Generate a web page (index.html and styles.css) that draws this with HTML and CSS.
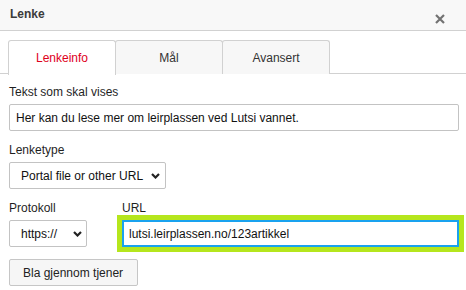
FILE: index.html
```html
<!DOCTYPE html>
<html lang="no">
<head>
<meta charset="utf-8">
<title>Lenke</title>
<link rel="stylesheet" href="styles.css">
</head>
<body>
<div class="dialog">
  <div class="titlebar">
    <span class="title">Lenke</span>
    <span class="close" aria-label="Lukk">
      <svg width="10" height="10" viewBox="0 0 10 10"><path d="M1 1L9 9M9 1L1 9" stroke="#727272" stroke-width="2.2" stroke-linecap="butt"/></svg>
    </span>
  </div>
  <div class="tabs">
    <div class="tab active">Lenkeinfo</div>
    <div class="tab">Mål</div>
    <div class="tab">Avansert</div>
  </div>
  <div class="content">
    <div class="field">
      <label class="label">Tekst som skal vises</label>
      <div class="input">Her kan du lese mer om leirplassen ved Lutsi vannet.</div>
    </div>
    <div class="field">
      <label class="label">Lenketype</label>
      <div class="select select-type">
        <span class="val">Portal file or other URL</span>
        <svg class="chev" width="9" height="6" viewBox="0 0 9 6"><path d="M1 1L4.5 4.5L8 1" fill="none" stroke="#222" stroke-width="2.2"/></svg>
      </div>
    </div>
    <div class="row">
      <div class="field proto">
        <label class="label">Protokoll</label>
        <div class="select select-proto">
          <span class="val">https://</span>
          <svg class="chev" width="9" height="6" viewBox="0 0 9 6"><path d="M1 1L4.5 4.5L8 1" fill="none" stroke="#222" stroke-width="2.2"/></svg>
        </div>
      </div>
      <div class="field url">
        <label class="label">URL</label>
        <div class="input focus">lutsi.leirplassen.no/123artikkel</div>
      </div>
    </div>
    <button class="btn">Bla gjennom tjener</button>
  </div>
</div>
</body>
</html>
```

FILE: styles.css
```css
html, body {
  margin: 0;
  padding: 0;
  background: #fff;
}
body {
  font-family: "Liberation Sans", Arial, sans-serif;
  font-size: 12px;
  color: #222;
  width: 466px;
  height: 290px;
  overflow: hidden;
}
.titlebar {
  height: 30px;
  background: #f8f8f8;
  border-bottom: 1px solid #d1d1d1;
  display: flex;
  align-items: center;
  justify-content: space-between;
  padding: 0 21px 0 10px;
  box-sizing: content-box;
}
.title {
  font-weight: bold;
  color: #3b3b3b;
  padding-bottom: 2px;
}
.close {
  display: flex;
  margin-top: 8px;
}
.tabs {
  margin-top: 9px;
  padding-left: 8px;
  display: flex;
  border-bottom: 1px solid #d1d1d1;
  height: 33px;
}
.tab {
  width: 106px;
  height: 33px;
  border: 1px solid #d1d1d1;
  border-bottom: none;
  border-radius: 3px 3px 0 0;
  background: #f7f7f7;
  color: #333;
  display: flex;
  align-items: center;
  justify-content: center;
  margin-right: -1px;
}
.tab.active {
  background: #fff;
  color: #e0001b;
  height: 34px;
  position: relative;
  z-index: 1;
}
.content {
  padding: 11px 7px 0 9px;
}
.field {
  display: flex;
  flex-direction: column;
}
.label {
  line-height: 15px;
  margin-bottom: 4px;
  color: #1f1f1f;
}
.input {
  height: 25px;
  border: 1px solid #c3c3c3;
  border-radius: 2px;
  padding: 0 6px;
  display: flex;
  align-items: center;
  color: #111;
  margin-bottom: 12px;
}
.select {
  border: 1px solid #c3c3c3;
  border-radius: 2px;
  display: flex;
  align-items: center;
  justify-content: space-between;
  color: #111;
  margin-bottom: 12px;
  box-sizing: border-box;
  height: 27px;
}
.val {
  white-space: nowrap;
}
.select-type {
  width: 157px;
  padding: 0 5px 0 11px;
}
.select-proto {
  width: 78px;
  padding: 0 4px 0 11px;
}
.chev {
  display: block;
  flex-shrink: 0;
}
.row {
  display: flex;
  gap: 35px;
}
.url {
  flex: 1;
}
.input.focus {
  border: 2px solid #19a2ef;
  border-radius: 0;
  outline: 5px solid #b5e61d;
  height: 23px;
  padding: 0 5px;
  margin-bottom: 10px;
}
.btn {
  font: inherit;
  color: #222;
  height: 27px;
  padding: 0 14px 0 13px;
  background: #f6f6f6;
  border: 1px solid #c6c6c6;
  border-radius: 2px;
  margin: 0;
}
```
